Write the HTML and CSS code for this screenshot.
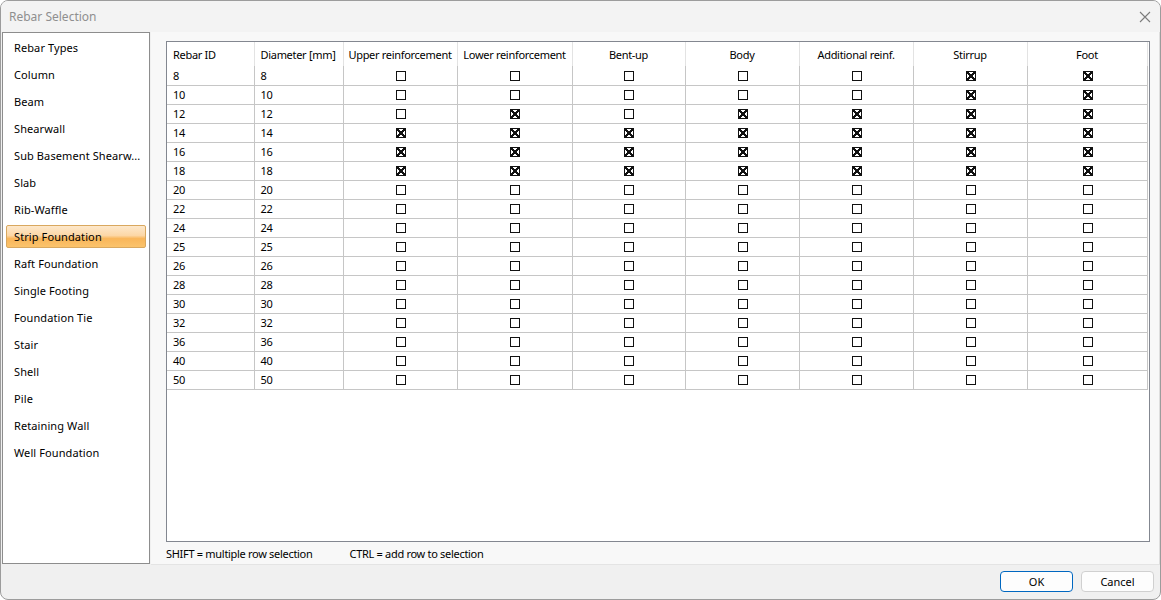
FILE: index.html
```html
<!DOCTYPE html>
<html lang="en">
<head>
    <meta charset="UTF-8">
    <title>Rebar Selection</title>
    <link rel="stylesheet" href="styles.css">
</head>
<body>

<div class="window">
    <div class="titlebar">
        <span class="title">Rebar Selection</span>
        <svg class="close" width="12" height="12" viewBox="0 0 12 12">
            <path d="M1 1 L11 11 M11 1 L1 11" stroke="#7c7c7c" stroke-width="1.1" fill="none"/>
        </svg>
    </div>

    <div class="main">
        <ul class="nav">
            <li>Rebar Types</li>
            <li>Column</li>
            <li>Beam</li>
            <li>Shearwall</li>
            <li>Sub Basement Shearw...</li>
            <li>Slab</li>
            <li>Rib-Waffle</li>
            <li class="selected">Strip Foundation</li>
            <li>Raft Foundation</li>
            <li>Single Footing</li>
            <li>Foundation Tie</li>
            <li>Stair</li>
            <li>Shell</li>
            <li>Pile</li>
            <li>Retaining Wall</li>
            <li>Well Foundation</li>
        </ul>

        <div class="content">
            <div class="grid">
                <table>
                    <colgroup>
                        <col style="width:87px"><col style="width:89px"><col style="width:114px">
                        <col style="width:115px"><col style="width:113px"><col style="width:114px">
                        <col style="width:114px"><col style="width:114px"><col style="width:120px">
                    </colgroup>
                    <thead>
                        <tr>
                            <th class="left">Rebar ID</th>
                            <th class="left">Diameter [mm]</th>
                            <th>Upper reinforcement</th>
                            <th>Lower reinforcement</th>
                            <th>Bent-up</th>
                            <th>Body</th>
                            <th>Additional reinf.</th>
                            <th>Stirrup</th>
                            <th>Foot</th>
                        </tr>
                    </thead>
                    <tbody>
                        <tr><td>8</td><td>8</td><td><i class="cb"></i></td><td><i class="cb"></i></td><td><i class="cb"></i></td><td><i class="cb"></i></td><td><i class="cb"></i></td><td><i class="cb on"></i></td><td><i class="cb on"></i></td></tr>
                        <tr><td>10</td><td>10</td><td><i class="cb"></i></td><td><i class="cb"></i></td><td><i class="cb"></i></td><td><i class="cb"></i></td><td><i class="cb"></i></td><td><i class="cb on"></i></td><td><i class="cb on"></i></td></tr>
                        <tr><td>12</td><td>12</td><td><i class="cb"></i></td><td><i class="cb on"></i></td><td><i class="cb"></i></td><td><i class="cb on"></i></td><td><i class="cb on"></i></td><td><i class="cb on"></i></td><td><i class="cb on"></i></td></tr>
                        <tr><td>14</td><td>14</td><td><i class="cb on"></i></td><td><i class="cb on"></i></td><td><i class="cb on"></i></td><td><i class="cb on"></i></td><td><i class="cb on"></i></td><td><i class="cb on"></i></td><td><i class="cb on"></i></td></tr>
                        <tr><td>16</td><td>16</td><td><i class="cb on"></i></td><td><i class="cb on"></i></td><td><i class="cb on"></i></td><td><i class="cb on"></i></td><td><i class="cb on"></i></td><td><i class="cb on"></i></td><td><i class="cb on"></i></td></tr>
                        <tr><td>18</td><td>18</td><td><i class="cb on"></i></td><td><i class="cb on"></i></td><td><i class="cb on"></i></td><td><i class="cb on"></i></td><td><i class="cb on"></i></td><td><i class="cb on"></i></td><td><i class="cb on"></i></td></tr>
                        <tr><td>20</td><td>20</td><td><i class="cb"></i></td><td><i class="cb"></i></td><td><i class="cb"></i></td><td><i class="cb"></i></td><td><i class="cb"></i></td><td><i class="cb"></i></td><td><i class="cb"></i></td></tr>
                        <tr><td>22</td><td>22</td><td><i class="cb"></i></td><td><i class="cb"></i></td><td><i class="cb"></i></td><td><i class="cb"></i></td><td><i class="cb"></i></td><td><i class="cb"></i></td><td><i class="cb"></i></td></tr>
                        <tr><td>24</td><td>24</td><td><i class="cb"></i></td><td><i class="cb"></i></td><td><i class="cb"></i></td><td><i class="cb"></i></td><td><i class="cb"></i></td><td><i class="cb"></i></td><td><i class="cb"></i></td></tr>
                        <tr><td>25</td><td>25</td><td><i class="cb"></i></td><td><i class="cb"></i></td><td><i class="cb"></i></td><td><i class="cb"></i></td><td><i class="cb"></i></td><td><i class="cb"></i></td><td><i class="cb"></i></td></tr>
                        <tr><td>26</td><td>26</td><td><i class="cb"></i></td><td><i class="cb"></i></td><td><i class="cb"></i></td><td><i class="cb"></i></td><td><i class="cb"></i></td><td><i class="cb"></i></td><td><i class="cb"></i></td></tr>
                        <tr><td>28</td><td>28</td><td><i class="cb"></i></td><td><i class="cb"></i></td><td><i class="cb"></i></td><td><i class="cb"></i></td><td><i class="cb"></i></td><td><i class="cb"></i></td><td><i class="cb"></i></td></tr>
                        <tr><td>30</td><td>30</td><td><i class="cb"></i></td><td><i class="cb"></i></td><td><i class="cb"></i></td><td><i class="cb"></i></td><td><i class="cb"></i></td><td><i class="cb"></i></td><td><i class="cb"></i></td></tr>
                        <tr><td>32</td><td>32</td><td><i class="cb"></i></td><td><i class="cb"></i></td><td><i class="cb"></i></td><td><i class="cb"></i></td><td><i class="cb"></i></td><td><i class="cb"></i></td><td><i class="cb"></i></td></tr>
                        <tr><td>36</td><td>36</td><td><i class="cb"></i></td><td><i class="cb"></i></td><td><i class="cb"></i></td><td><i class="cb"></i></td><td><i class="cb"></i></td><td><i class="cb"></i></td><td><i class="cb"></i></td></tr>
                        <tr><td>40</td><td>40</td><td><i class="cb"></i></td><td><i class="cb"></i></td><td><i class="cb"></i></td><td><i class="cb"></i></td><td><i class="cb"></i></td><td><i class="cb"></i></td><td><i class="cb"></i></td></tr>
                        <tr><td>50</td><td>50</td><td><i class="cb"></i></td><td><i class="cb"></i></td><td><i class="cb"></i></td><td><i class="cb"></i></td><td><i class="cb"></i></td><td><i class="cb"></i></td><td><i class="cb"></i></td></tr>
                    </tbody>
                </table>
            </div>
            <div class="hint">
                <span>SHIFT = multiple row selection</span>
                <span>CTRL = add row to selection</span>
            </div>
        </div>
    </div>

    <div class="footer">
        <button class="btn default">OK</button>
        <button class="btn">Cancel</button>
    </div>
</div>

</body>
</html>
```

FILE: styles.css
```css
* {
    box-sizing: border-box;
}

body {
    margin: 0;
    font-family: "Noto Sans", "Open Sans", sans-serif;
    font-size: 11px;
    letter-spacing: -0.3px;
    color: #000;
    background: #fff;
}

.window {
    display: flex;
    flex-direction: column;
    width: 1161px;
    height: 600px;
    border: 1px solid #9c9c9c;
    border-radius: 8px;
    background: #f0f0f0;
    overflow: hidden;
}

.titlebar {
    display: flex;
    align-items: center;
    justify-content: space-between;
    height: 31px;
    padding: 0 9px 0 8px;
    background: #f3f3f3;
}

.title {
    font-size: 12px;
    letter-spacing: 0;
    color: #8f8f8f;
}

.main {
    display: flex;
    height: 533px;
}

/* left list */
.nav {
    display: flex;
    flex-direction: column;
    gap: 4px;
    width: 148px;
    margin: 0 0 1px 1px;
    padding: 3px 3px;
    list-style: none;
    background: #fff;
    border: 1px solid #8d8d8d;
    letter-spacing: 0.1px;
}

.nav li {
    height: 23px;
    line-height: 21px;
    padding-left: 7px;
    border: 1px solid transparent;
    border-radius: 2px;
    white-space: nowrap;
    overflow: hidden;
}

.nav li.selected {
    border-color: #d9a85f;
    background: linear-gradient(#fde8cb 0%, #fcd7a6 45%, #f9b65a 60%, #fbc36c 100%);
}

/* grid area */
.content {
    flex: 1;
    display: flex;
    flex-direction: column;
    padding: 9px 9px 0 15px;
    margin-left: 1px;
    background: #f8f8f8;
    border-right: 1px solid #dedede;
    border-bottom: 1px solid #e4e4e4;
}

.grid {
    height: 502px;
    background: #fff;
    border: 1px solid #838790;
}

table {
    border-collapse: collapse;
    table-layout: fixed;
    width: 980px;
}

th {
    height: 24px;
    padding: 0;
    font-weight: normal;
    text-align: center;
    border-right: 1px solid #e3e3e3;
}

th.left {
    text-align: left;
    padding-left: 6px;
}

td {
    height: 19px;
    padding: 0;
    text-align: center;
    border-right: 1px solid #c6c6c6;
    border-bottom: 1px solid #c6c6c6;
}

td:nth-child(1),
td:nth-child(2) {
    text-align: left;
    padding-left: 6px;
}

.cb {
    display: inline-block;
    width: 10px;
    height: 10px;
    vertical-align: middle;
    border: 1px solid #111;
    margin-top: -2px;
    margin-left: 1px;
}

.cb.on {
    background:
        linear-gradient(45deg, transparent 42%, #111 42%, #111 58%, transparent 58%),
        linear-gradient(-45deg, transparent 42%, #111 42%, #111 58%, transparent 58%);
}

.hint {
    display: flex;
    gap: 37px;
    height: 22px;
    align-items: center;
}

/* buttons */
.footer {
    flex: 1;
    display: flex;
    justify-content: flex-end;
    align-items: flex-start;
    gap: 8px;
    padding: 6px 6px 0 0;
}

.btn {
    width: 73px;
    height: 21px;
    padding: 0;
    font-family: inherit;
    font-size: 11px;
    letter-spacing: 0;
    color: #000;
    background: #fdfdfd;
    border: 1px solid #d0d0d0;
    border-radius: 4px;
}

.btn.default {
    border-color: #0067c0;
}
```
